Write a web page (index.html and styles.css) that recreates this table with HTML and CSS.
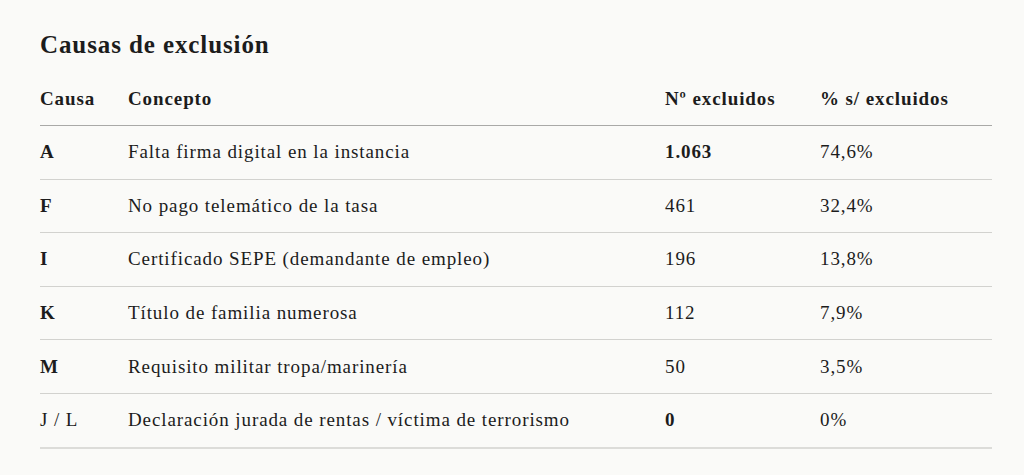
FILE: index.html
```html
<!DOCTYPE html>
<html lang="es">
<head>
<meta charset="utf-8">
<title>Causas de exclusión</title>
<link rel="stylesheet" href="styles.css">
</head>
<body>
<main class="wrap">
  <h2 class="title">Causas de exclusión</h2>
  <table class="tbl">
    <thead>
      <tr>
        <th class="c-causa">Causa</th>
        <th class="c-concepto">Concepto</th>
        <th class="c-num">Nº excluidos</th>
        <th class="c-pct">% s/ excluidos</th>
      </tr>
    </thead>
    <tbody>
      <tr><td class="code">A</td><td>Falta firma digital en la instancia</td><td class="strong">1.063</td><td>74,6%</td></tr>
      <tr><td class="code">F</td><td>No pago telemático de la tasa</td><td>461</td><td>32,4%</td></tr>
      <tr><td class="code">I</td><td>Certificado SEPE (demandante de empleo)</td><td>196</td><td>13,8%</td></tr>
      <tr><td class="code">K</td><td>Título de familia numerosa</td><td>112</td><td>7,9%</td></tr>
      <tr><td class="code">M</td><td>Requisito militar tropa/marinería</td><td>50</td><td>3,5%</td></tr>
      <tr class="last"><td>J / L</td><td>Declaración jurada de rentas / víctima de terrorismo</td><td class="strong">0</td><td>0%</td></tr>
    </tbody>
  </table>
</main>
</body>
</html>
```
FILE: styles.css
```css
html, body {
  margin: 0;
  padding: 0;
  background: #fafaf8;
}
body {
  font-family: "Liberation Serif", "DejaVu Serif", serif;
  color: #1c1c1c;
}
.wrap {
  padding: 30px 32px 0 40px;
}
.title {
  margin: 0;
  font-size: 25px;
  line-height: 30px;
  font-weight: 600;
  letter-spacing: 0.9px;
}
.tbl {
  width: 952px;
  border-collapse: collapse;
  margin-top: 13px;
  font-size: 19px;
  letter-spacing: 0.9px;
}
.tbl th {
  text-align: left;
  font-weight: 600;
  height: 52px;
  padding: 0;
  vertical-align: middle;
  border-bottom: 1.5px solid #a9a9a7;
}
.tbl td {
  height: 52.6px;
  padding: 0;
  vertical-align: middle;
  border-bottom: 1px solid #d2d2cf;
}
.tbl tr.last td {
  border-bottom: 2px solid #dcdcd9;
}
.c-causa { width: 88px; }
.c-concepto { width: 537px; }
.c-num { width: 155px; }
.code { font-weight: 700; }
.strong { font-weight: 700; }
```
